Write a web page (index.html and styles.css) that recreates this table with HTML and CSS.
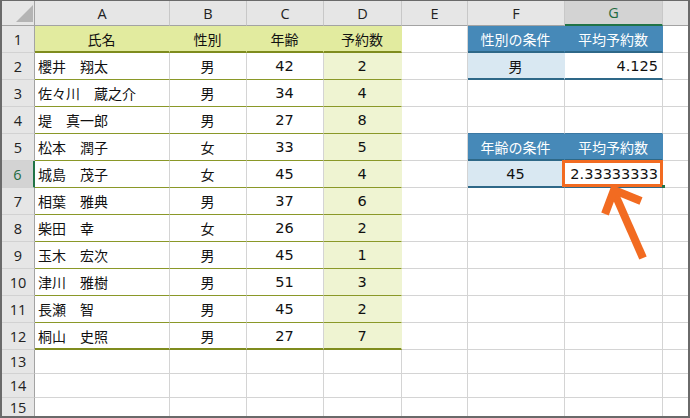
FILE: index.html
```html
<!DOCTYPE html>
<html lang="ja">
<head>
<meta charset="utf-8">
<title>Sheet</title>
<link rel="stylesheet" href="styles.css">
</head>
<body>
<div class="sheet">
  <div class="ch corner"><div class="tri"></div></div>
  <div class="ch">A</div><div class="ch">B</div><div class="ch">C</div><div class="ch">D</div><div class="ch">E</div><div class="ch">F</div><div class="ch sel">G</div><div class="ch last"></div>

  <div class="rh">1</div>
  <div class="c ctr t1h">氏名</div><div class="c ctr t1h">性別</div><div class="c ctr t1h">年齢</div><div class="c ctr t1h">予約数</div>
  <div class="c"></div><div class="c ctr bh">性別の条件</div><div class="c ctr bh">平均予約数</div><div class="c h"></div>

  <div class="rh">2</div>
  <div class="c t1">櫻井　翔太</div><div class="c ctr t1">男</div><div class="c ctr num t1">42</div><div class="c ctr num t1 t1d">2</div>
  <div class="c"></div><div class="c ctr bf">男</div><div class="c rt num bb">4.125</div><div class="c h"></div>

  <div class="rh">3</div>
  <div class="c t1">佐々川　蔵之介</div><div class="c ctr t1">男</div><div class="c ctr num t1">34</div><div class="c ctr num t1 t1d">4</div>
  <div class="c"></div><div class="c"></div><div class="c"></div><div class="c h"></div>

  <div class="rh">4</div>
  <div class="c t1">堤　真一郎</div><div class="c ctr t1">男</div><div class="c ctr num t1">27</div><div class="c ctr num t1 t1d">8</div>
  <div class="c"></div><div class="c tb"></div><div class="c tb"></div><div class="c h"></div>

  <div class="rh">5</div>
  <div class="c t1">松本　潤子</div><div class="c ctr t1">女</div><div class="c ctr num t1">33</div><div class="c ctr num t1 t1d">5</div>
  <div class="c"></div><div class="c ctr bh">年齢の条件</div><div class="c ctr bh">平均予約数</div><div class="c h"></div>

  <div class="rh sel">6</div>
  <div class="c t1">城島　茂子</div><div class="c ctr t1">女</div><div class="c ctr num t1">45</div><div class="c ctr num t1 t1d">4</div>
  <div class="c"></div><div class="c ctr num bf">45</div><div class="c rt num bb hl">2.33333333</div><div class="c h"></div>

  <div class="rh">7</div>
  <div class="c t1">相葉　雅典</div><div class="c ctr t1">男</div><div class="c ctr num t1">37</div><div class="c ctr num t1 t1d">6</div>
  <div class="c"></div><div class="c"></div><div class="c"></div><div class="c h"></div>

  <div class="rh">8</div>
  <div class="c t1">柴田　幸</div><div class="c ctr t1">女</div><div class="c ctr num t1">26</div><div class="c ctr num t1 t1d">2</div>
  <div class="c"></div><div class="c"></div><div class="c"></div><div class="c h"></div>

  <div class="rh">9</div>
  <div class="c t1">玉木　宏次</div><div class="c ctr t1">男</div><div class="c ctr num t1">45</div><div class="c ctr num t1 t1d">1</div>
  <div class="c"></div><div class="c"></div><div class="c"></div><div class="c h"></div>

  <div class="rh">10</div>
  <div class="c t1">津川　雅樹</div><div class="c ctr t1">男</div><div class="c ctr num t1">51</div><div class="c ctr num t1 t1d">3</div>
  <div class="c"></div><div class="c"></div><div class="c"></div><div class="c h"></div>

  <div class="rh">11</div>
  <div class="c t1">長瀬　智</div><div class="c ctr t1">男</div><div class="c ctr num t1">45</div><div class="c ctr num t1 t1d">2</div>
  <div class="c"></div><div class="c"></div><div class="c"></div><div class="c h"></div>

  <div class="rh">12</div>
  <div class="c t1 t1l">桐山　史照</div><div class="c ctr t1 t1l">男</div><div class="c ctr num t1 t1l">27</div><div class="c ctr num t1 t1d t1l">7</div>
  <div class="c"></div><div class="c"></div><div class="c"></div><div class="c h"></div>

  <div class="rh">13</div>
  <div class="c"></div><div class="c"></div><div class="c"></div><div class="c"></div><div class="c"></div><div class="c"></div><div class="c"></div><div class="c h"></div>

  <div class="rh">14</div>
  <div class="c"></div><div class="c"></div><div class="c"></div><div class="c"></div><div class="c"></div><div class="c"></div><div class="c"></div><div class="c h"></div>

  <div class="rh end">15</div>
  <div class="c end"></div><div class="c end"></div><div class="c end"></div><div class="c end"></div><div class="c end"></div><div class="c end"></div><div class="c end"></div><div class="c h end"></div>

  <svg class="arrow" width="690" height="418" viewBox="0 0 690 418">
    <line x1="643" y1="258" x2="614" y2="192" stroke="#f26b21" stroke-width="8"/>
    <polyline points="605,214 614,190 641,201" fill="none" stroke="#f26b21" stroke-width="8" stroke-linejoin="miter" stroke-miterlimit="10"/>
  </svg>
</div>
</body>
</html>
```

FILE: styles.css
```css
html, body {
  margin: 0;
  padding: 0;
  background: #ffffff;
}

.sheet {
  position: relative;
  width: 690px;
  height: 418px;
  box-sizing: border-box;
  border-style: solid;
  border-color: #6a6a6a;
  border-width: 1px 2px 2px 2px;
  display: grid;
  grid-template-columns: 33px 135px 77px 77px 78px 66px 97px 98px 1fr;
  grid-template-rows: 25px repeat(12, 27px) 24px 24px 1fr;
  font-family: "DejaVu Sans", "Noto Sans CJK JP", sans-serif;
  font-size: 14px;
  color: #111111;
  background: #ffffff;
}

.ch, .rh, .c {
  box-sizing: border-box;
  display: flex;
  align-items: center;
  white-space: nowrap;
  overflow: hidden;
}

/* column headers */
.ch {
  justify-content: center;
  background: #e6e6e6;
  border-right: 1px solid #c8c8c8;
  border-bottom: 1px solid #a3a3a3;
  font-family: "Open Sans", "Liberation Sans", sans-serif;
  font-size: 14.5px;
  color: #222222;
}
.ch.corner {
  justify-content: flex-end;
  align-items: flex-end;
  padding: 0 1px 3px 0;
  border-right-color: #a3a3a3;
}
.tri {
  width: 17px;
  height: 17px;
  background: #b4b4b4;
  clip-path: polygon(100% 0, 100% 100%, 0 100%);
}
.ch.sel {
  background: #d3d3d3;
  color: #1e6b41;
  border-bottom: 2px solid #217346;
}
.ch.last {
  border-right: none;
}

/* row headers */
.rh {
  justify-content: center;
  background: #e6e6e6;
  border-right: 1px solid #a3a3a3;
  border-bottom: 1px solid #d2d2d2;
  font-family: "Open Sans", "Liberation Sans", sans-serif;
  font-size: 14.5px;
  color: #222222;
}
.rh.sel {
  background: #d3d3d3;
  color: #1e6b41;
  border-right: 2px solid #217346;
}
.rh.end {
  border-bottom: none;
}

/* cells */
.c {
  padding: 0 4px 0 3px;
  border-right: 1px solid #d4d4d4;
  border-bottom: 1px solid #d4d4d4;
}
.c.h {
  border-right: none;
}
.c.end {
  border-bottom: none;
}
.ctr { justify-content: center; }
.rt { justify-content: flex-end; }
.num { font-size: 14.5px; }

/* table 1 (olive) */
.t1h {
  background: #e2eb9f;
  border-right-color: #e2eb9f;
  border-bottom: 2px solid #7f8c1e;
}
.t1 {
  border-bottom-color: #8a9828;
}
.t1d {
  background: #eff4d2;
  border-right-color: #eff4d2;
}
.t1l {
  border-bottom: 2px solid #7f8c1e;
}

/* tables 2/3 (blue) */
.bh {
  background: #4689b8;
  border-right-color: #4689b8;
  border-bottom: 2px solid #2e6888;
  color: #ffffff;
}
.bf {
  background: #d9e8f2;
  border-right-color: #d9e8f2;
  border-bottom: 2px solid #2e6888;
}
.bb {
  border-bottom: 2px solid #2e6888;
}
.tb {
  border-bottom-color: #3b78a3;
}

/* highlighted cell */
.hl {
  position: relative;
  overflow: visible;
}
.hl::after {
  content: "";
  position: absolute;
  left: -3px;
  top: -1px;
  right: -1px;
  bottom: -1px;
  border: 3px solid #f26b21;
}
.hl::before {
  content: "";
  position: absolute;
  right: -3px;
  bottom: -2px;
  width: 3px;
  height: 3px;
  background: #217346;
  z-index: 2;
}

.arrow {
  position: absolute;
  left: -2px;
  top: -1px;
  pointer-events: none;
}
```
